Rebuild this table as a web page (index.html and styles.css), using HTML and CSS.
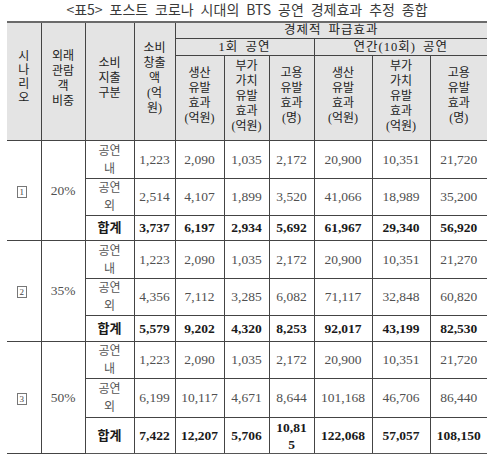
FILE: index.html
```html
<!DOCTYPE html>
<html lang="ko">
<head>
<meta charset="utf-8">
<title>표5</title>
<link rel="stylesheet" href="styles.css">
</head>
<body>
<div class="page">
  <div class="title">&lt;표5&gt; 포스트 코로나 시대의 BTS 공연 경제효과 추정 종합</div>
  <table class="tbl">
    <colgroup>
      <col class="c34"><col class="c44"><col class="c49"><col class="c41"><col class="c49">
      <col class="c45"><col class="c45"><col class="c58"><col class="c58"><col class="c57">
    </colgroup>
    <thead>
      <tr class="h1">
        <th rowspan="3" class="side tight">시<br>나<br>리<br>오</th>
        <th rowspan="3" class="side">외래<br>관람<br>객<br>비중</th>
        <th rowspan="3" class="side">소비<br>지출<br>구분</th>
        <th rowspan="3" class="side">소비<br>창출<br>액<br>(억<br>원)</th>
        <th colspan="6" class="top">경제적 파급효과</th>
      </tr>
      <tr class="h2">
        <th colspan="3">1회 공연</th>
        <th colspan="3">연간(10회) 공연</th>
      </tr>
      <tr class="h3">
        <th>생산<br>유발<br>효과<br>(억원)</th>
        <th>부가<br>가치<br>유발<br>효과<br>(억원)</th>
        <th>고용<br>유발<br>효과<br>(명)</th>
        <th>생산<br>유발<br>효과<br>(억원)</th>
        <th>부가<br>가치<br>유발<br>효과<br>(억원)</th>
        <th>고용<br>유발<br>효과<br>(명)</th>
      </tr>
    </thead>
    <tbody>
      <tr class="r38">
        <td rowspan="3" class="grp"><span class="box">1</span></td>
        <td rowspan="3" class="grp pct">20%</td>
        <td class="kind">공연<br>내</td>
        <td>1,223</td><td>2,090</td><td>1,035</td><td>2,172</td><td>20,900</td><td>10,351</td><td>21,720</td>
      </tr>
      <tr class="r37">
        <td class="kind">공연<br>외</td>
        <td>2,514</td><td>4,107</td><td>1,899</td><td>3,520</td><td>41,066</td><td>18,989</td><td>35,200</td>
      </tr>
      <tr class="r25 sum">
        <td class="kind">합계</td>
        <td>3,737</td><td>6,197</td><td>2,934</td><td>5,692</td><td>61,967</td><td>29,340</td><td>56,920</td>
      </tr>

      <tr class="r38">
        <td rowspan="3" class="grp"><span class="box">2</span></td>
        <td rowspan="3" class="grp pct">35%</td>
        <td class="kind">공연<br>내</td>
        <td>1,223</td><td>2,090</td><td>1,035</td><td>2,172</td><td>20,900</td><td>10,351</td><td>21,270</td>
      </tr>
      <tr class="r37">
        <td class="kind">공연<br>외</td>
        <td>4,356</td><td>7,112</td><td>3,285</td><td>6,082</td><td>71,117</td><td>32,848</td><td>60,820</td>
      </tr>
      <tr class="r26 sum">
        <td class="kind">합계</td>
        <td>5,579</td><td>9,202</td><td>4,320</td><td>8,253</td><td>92,017</td><td>43,199</td><td>82,530</td>
      </tr>

      <tr class="r36">
        <td rowspan="3" class="grp"><span class="box">3</span></td>
        <td rowspan="3" class="grp pct">50%</td>
        <td class="kind">공연<br>내</td>
        <td>1,223</td><td>2,090</td><td>1,035</td><td>2,172</td><td>20,900</td><td>10,351</td><td>21,720</td>
      </tr>
      <tr class="r39">
        <td class="kind">공연<br>외</td>
        <td>6,199</td><td>10,117</td><td>4,671</td><td>8,644</td><td>101,168</td><td>46,706</td><td>86,440</td>
      </tr>
      <tr class="r36 sum last">
        <td class="kind">합계</td>
        <td>7,422</td><td>12,207</td><td>5,706</td><td class="wrap">10,81<br>5</td><td>122,068</td><td>57,057</td><td>108,150</td>
      </tr>
    </tbody>
  </table>
</div>
</body>
</html>
```

FILE: styles.css
```css
html, body {
  margin: 0;
  padding: 0;
  background: #ffffff;
}

.page {
  width: 500px;
  height: 461px;
  padding-left: 7px;
  box-sizing: border-box;
  overflow: hidden;
}

.title {
  width: 480px;
  height: 21px;
  line-height: 18px;
  text-align: center;
  font-family: "Noto Sans CJK KR", "Noto Sans", sans-serif;
  font-size: 14px;
  color: #3a3a3a;
  word-spacing: 3px;
  white-space: nowrap;
}

.tbl {
  border-collapse: collapse;
  table-layout: fixed;
  width: 480px;
  font-family: "Liberation Serif", "Noto Sans CJK KR", serif;
  color: #4a4a4a;
  border-top: 2px solid #6a6a6a;
}

.c34 { width: 34px; }
.c44 { width: 44px; }
.c49 { width: 49px; }
.c41 { width: 41px; }
.c45 { width: 45px; }
.c58 { width: 58px; }
.c57 { width: 57px; }

.tbl th,
.tbl td {
  border: 1px solid #444;
  padding: 0;
  text-align: center;
  vertical-align: middle;
  overflow: hidden;
  white-space: nowrap;
}

.tbl th:first-child,
.tbl td.grp:first-child {
  border-left: none;
}

.tbl tr > :last-child {
  border-right: none;
}

.tbl th {
  background: #e4e4e4;
  font-weight: normal;
  font-size: 12px;
  line-height: 15px;
  color: #222;
}

.tbl th.side {
  padding-bottom: 6px;
}

.tbl th.tight {
  line-height: 14px;
  padding-bottom: 10px;
}

.tbl th.top {
  border-right: none;
}

.h1 { height: 16px; }
.h2 { height: 17px; }
.h3 { height: 85px; }

.tbl .h3 th {
  padding-bottom: 4px;
}

.tbl .h1 th.top,
.tbl .h2 th {
  font-size: 12.5px;
  letter-spacing: 1px;
  word-spacing: 3px;
  color: #1e1e1e;
}

.tbl td {
  font-size: 13.5px;
  line-height: 18px;
  color: #505050;
}

.tbl td.kind {
  font-size: 12px;
  line-height: 18px;
  color: #555;
}

.r25 { height: 25px; }
.r26 { height: 26px; }
.r36 { height: 36px; }
.r37 { height: 37px; }
.r38 { height: 38px; }
.r39 { height: 39px; }

.sum td {
  font-weight: bold;
  color: #1a1a1a;
}

.sum td.kind {
  font-size: 13px;
  color: #1a1a1a;
}

.tbl td.wrap {
  line-height: 17px;
}

.pct {
  font-size: 13.5px;
}

.box {
  display: inline-block;
  width: 8px;
  height: 10px;
  border: 1px solid #777;
  font-size: 9px;
  line-height: 10px;
  color: #444;
  text-align: center;
  margin-right: 4px;
}

.last td {
  border-bottom: 1px solid #555;
}
```
